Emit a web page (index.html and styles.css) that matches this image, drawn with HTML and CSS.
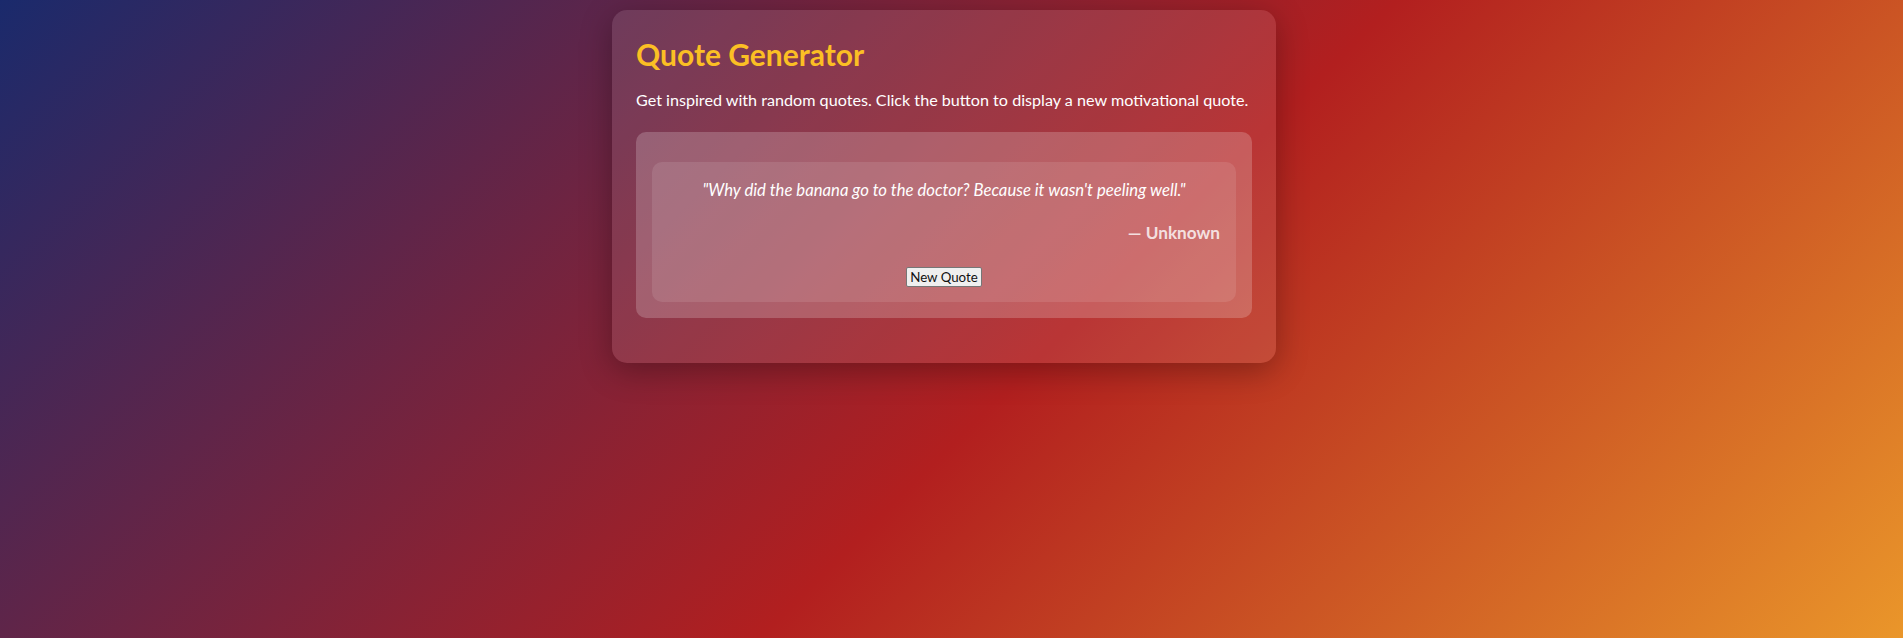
FILE: index.html
```html
<!DOCTYPE html>
<html lang="en">
<head>
<meta charset="utf-8">
<title>Quote Generator</title>
<link rel="stylesheet" href="styles.css">
</head>
<body>
<div class="page">
  <main class="card">
    <h1 class="title">Quote Generator</h1>
    <p class="intro">Get inspired with random quotes. Click the button to display a new motivational quote.</p>
    <section class="quote-wrap">
      <div class="quote-box">
        <p class="quote-text">"Why did the banana go to the doctor? Because it wasn't peeling well."</p>
        <p class="quote-author">— Unknown</p>
        <div class="actions">
          <button class="new-quote" type="button">New Quote</button>
        </div>
      </div>
    </section>
  </main>
</div>
</body>
</html>
```

FILE: styles.css
```css
html, body {
  margin: 0;
  padding: 0;
  height: 100%;
}

body {
  background: linear-gradient(135deg, #1a2a6c 0%, #b21f1f 55%, #ea962a 100%);
  font-family: Lato, "Noto Sans", sans-serif;
  color: #ffffff;
}

.page {
  display: flex;
  justify-content: center;
  align-items: flex-start;
  padding: 10px 15px 0 0;
}

.card {
  width: 616px;
  padding: 24px 24px 45px;
  background: rgba(255, 255, 255, 0.1);
  border-radius: 15px;
  box-shadow: 0 8px 32px rgba(0, 0, 0, 0.3);
}

.title {
  margin: 2px 0 0;
  font-size: 30px;
  line-height: 37px;
  font-weight: 700;
  color: #fbbf24;
}

.intro {
  margin: 16px 0 0;
  font-size: 16.15px;
  line-height: 22px;
}

.quote-wrap {
  margin-top: 21px;
  padding: 30px 16px 16px;
  background: rgba(255, 255, 255, 0.2);
  border-radius: 10px;
}

.quote-box {
  padding: 16px 16px 15px;
  background: rgba(255, 255, 255, 0.1);
  border-radius: 10px;
}

.quote-text {
  margin: 0;
  font-size: 16.7px;
  line-height: 24px;
  font-style: italic;
  text-align: center;
}

.quote-author {
  margin: 20px 0 0;
  font-size: 17.2px;
  line-height: 22px;
  font-weight: 700;
  text-align: right;
  color: rgba(255, 255, 255, 0.8);
}

.actions {
  display: flex;
  justify-content: center;
  margin-top: 23px;
}

.new-quote {
  margin: 0;
  height: 20px;
  padding: 0 3px;
  font-family: Lato, "Noto Sans", sans-serif;
  font-size: 13.3px;
  line-height: 16px;
  color: #111111;
  background: #efefef;
  border: 1px solid #767676;
  border-radius: 2px;
}
```
